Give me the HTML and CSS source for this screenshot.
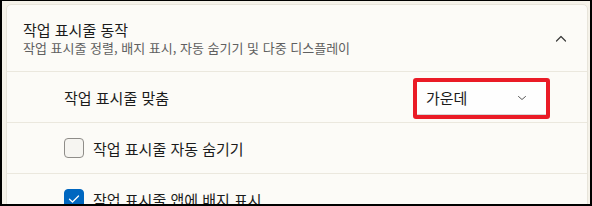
FILE: index.html
```html
<!DOCTYPE html>
<html lang="ko">
<head>
<meta charset="utf-8">
<link rel="stylesheet" href="styles.css">
</head>
<body>
<div class="frame">
  <div class="card">
    <div class="header">
      <div class="header-text">
        <div class="title">작업 표시줄 동작</div>
        <div class="subtitle">작업 표시줄 정렬, 배지 표시, 자동 숨기기 및 다중 디스플레이</div>
      </div>
      <svg class="chev-up" width="12" height="8" viewBox="0 0 12 8"><path d="M1.5 6 L6 1.5 L10.5 6" fill="none" stroke="#3a3a3a" stroke-width="1.2" stroke-linecap="round" stroke-linejoin="round"/></svg>
    </div>
    <div class="row row-align">
      <span class="label">작업 표시줄 맞춤</span>
      <div class="highlight">
        <div class="dropdown">
          <span class="dd-text">가운데</span>
          <svg class="chev-down" width="10" height="6" viewBox="0 0 10 6"><path d="M1.5 1.5 L5 4.5 L8.5 1.5" fill="none" stroke="#5a5a5a" stroke-width="1" stroke-linecap="round" stroke-linejoin="round"/></svg>
        </div>
      </div>
    </div>
    <div class="row">
      <span class="checkbox"></span>
      <span class="label">작업 표시줄 자동 숨기기</span>
    </div>
    <div class="row">
      <span class="checkbox checked"><svg width="12" height="10" viewBox="0 0 12 10"><path d="M1.5 5.2 L4.5 8 L10.5 2" fill="none" stroke="#fff" stroke-width="1.3" stroke-linecap="round" stroke-linejoin="round"/></svg></span>
      <span class="label">작업 표시줄 앱에 배지 표시</span>
    </div>
  </div>
</div>
</body>
</html>
```

FILE: styles.css
```css
html, body {
  margin: 0;
  padding: 0;
  background: #000;
}
body {
  font-family: "Noto Sans CJK KR", "Noto Sans", sans-serif;
  color: #1b1b1b;
}
.frame {
  width: 592px;
  height: 206px;
  box-sizing: border-box;
  border-style: solid;
  border-color: #000;
  border-width: 1px 2px 2px 2px;
  background: #f5f2e9;
  padding: 3px 2px 0 4px;
  overflow: hidden;
}
.card {
  background: #fcfbf7;
  border: 1px solid #e8e5db;
  border-radius: 5px;
  height: 260px;
}
.header {
  height: 66px;
  display: flex;
  align-items: center;
  justify-content: space-between;
  padding: 0 20px 0 16px;
  border-bottom: 1px solid #ebe8de;
}
.header-text {
  display: flex;
  flex-direction: column;
  gap: 0;
}
.title {
  font-size: 15px;
  line-height: 19px;
  color: #1b1b1b;
}
.subtitle {
  font-size: 13px;
  line-height: 17px;
  color: #606060;
}
.chev-up {
  margin-top: 2px;
}
.row {
  height: 50px;
  display: flex;
  align-items: center;
  padding-left: 57px;
  border-bottom: 1px solid #ebe8de;
}
.row-align {
  justify-content: space-between;
  padding-right: 37px;
}
.label {
  font-size: 15px;
  line-height: 19px;
  color: #1b1b1b;
}
.highlight {
  border: 4px solid #ea1b26;
  border-radius: 3px;
  margin-top: 2px;
}
.dropdown {
  width: 129px;
  height: 33px;
  box-sizing: border-box;
  background: #fefefe;
  border-bottom: 1px solid #d6d6d6;
  display: flex;
  align-items: center;
  justify-content: space-between;
  padding: 0 19px 0 9px;
}
.dd-text {
  font-size: 15px;
  color: #1b1b1b;
}
.chev-down {
  margin-top: 1px;
}
.checkbox {
  width: 18px;
  height: 18px;
  border: 1px solid #8f8d89;
  border-radius: 4px;
  background: #f6f5f1;
  margin-right: 9px;
  display: flex;
  align-items: center;
  justify-content: center;
}
.checkbox.checked {
  background: #0067c0;
  border-color: #0067c0;
}
```
